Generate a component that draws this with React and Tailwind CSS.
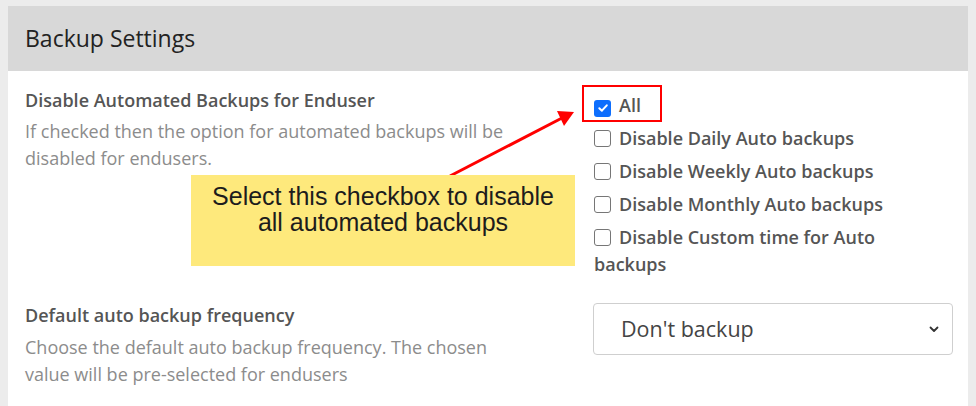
import React from "react";

function Box({ checked }) {
  if (checked) {
    return (
      <span className="inline-flex align-[-2px] w-[17px] h-[17px] rounded-[3px] bg-[#0d6efd] items-center justify-center mr-[8px]">
        <svg width="12" height="12" viewBox="0 0 12 12" fill="none">
          <path d="M2.3 6.2 L4.9 8.7 L9.8 3.3" stroke="white" strokeWidth="2" strokeLinecap="round" strokeLinejoin="round" />
        </svg>
      </span>
    );
  }
  return (
    <span className="inline-block align-[-2px] w-[17px] h-[17px] rounded-[3px] border border-[#767676] bg-white mr-[8px]" />
  );
}

export default function App() {
  const items = [
    ["All", true],
    ["Disable Daily Auto backups", false],
    ["Disable Weekly Auto backups", false],
    ["Disable Monthly Auto backups", false],
    ["Disable Custom time for Auto backups", false],
  ];
  return (
    <div className="relative w-[976px] h-[406px] overflow-hidden bg-[#ececec] pt-[6px] pl-[8px] font-['Open_Sans',sans-serif]">
      <div className="w-[960px] h-[500px] bg-white">
        <div className="h-[65px] bg-[#d8d8d8] flex items-center px-[17px]">
          <h2 className="text-[23px] text-[#222] leading-none">Backup Settings</h2>
        </div>
        <div className="px-[17px] pt-[17px]">
          <div className="grid grid-cols-[568px_360px]">
            <div className="pr-[70px]">
              <div className="text-[18px] font-semibold text-[#555] leading-[24px]">Disable Automated Backups for Enduser</div>
              <p className="mt-[6px] text-[18px] text-[#8c8c8c] leading-[27px]">If checked then the option for automated backups will be disabled for endusers.</p>
            </div>
            <div className="pt-[4px]">
              <div className="flex flex-col gap-[6px] w-[340px]">
                {items.map(([label, checked]) => (
                  <label key={label} className="block text-[18px] font-semibold text-[#555] leading-[27px] pl-px">
                    <Box checked={checked} />
                    {label}
                  </label>
                ))}
              </div>
            </div>
          </div>
          <div className="grid grid-cols-[568px_360px] mt-[25px]">
            <div className="pr-[70px]">
              <div className="text-[18px] font-semibold text-[#555] leading-[24px]">Default auto backup frequency</div>
              <p className="mt-[7px] text-[18px] text-[#8c8c8c] leading-[27px]">Choose the default auto backup frequency. The chosen value will be pre-selected for endusers</p>
            </div>
            <div>
              <div className="h-[52px] border border-[#cfcfcf] rounded-[4px] flex items-center justify-between pl-[27px] pr-[12px]">
                <span className="text-[21.5px] text-[#444]">Don't backup</span>
                <svg width="12" height="12" viewBox="0 0 12 12" fill="none">
                  <path d="M2.5 4.5 L6 8 L9.5 4.5" stroke="#333" strokeWidth="1.8" strokeLinecap="round" strokeLinejoin="round" />
                </svg>
              </div>
            </div>
          </div>
        </div>
      </div>

      {/* Red highlight box */}
      <div className="absolute left-[582px] top-[85px] w-[80px] h-[37px] border-2 border-[#ff0000]" />

      {/* Arrow */}
      <svg className="absolute left-0 top-0" width="976" height="406" viewBox="0 0 976 406">
        <line x1="450" y1="176" x2="562" y2="118" stroke="#ff0000" strokeWidth="3" />
        <polygon points="574,112 557,111 564,126" fill="#ff0000" />
      </svg>

      {/* Yellow callout */}
      <div className="absolute left-[191px] top-[175px] w-[384px] h-[91px] bg-[#fee97c] pt-[8px] text-center font-['Liberation_Sans',Arial,sans-serif] text-[25px] leading-[26px] text-[#1c1c1c]">
        Select this checkbox to disable<br />all automated backups
      </div>
    </div>
  );
}
